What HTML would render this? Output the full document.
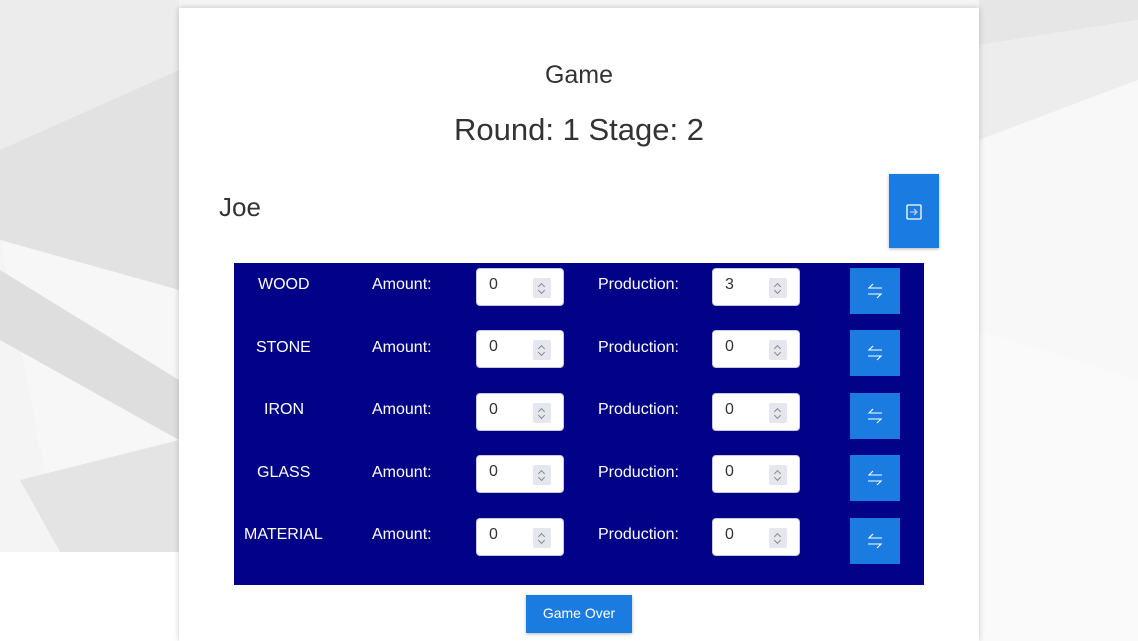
<!DOCTYPE html>
<html><head><meta charset="utf-8"><style>
*{margin:0;padding:0;box-sizing:border-box}
html,body{width:1138px;height:641px;overflow:hidden}
body{position:relative;font-family:"Liberation Sans",sans-serif;background:#fff}
.bg{position:absolute;left:0;top:0}
.card{position:absolute;left:179px;top:8px;width:800px;height:633px;background:#fff;box-shadow:0 0 6px rgba(0,0,0,.2)}
.t{position:absolute;color:#333;white-space:nowrap}
.tbl{position:absolute;left:234px;top:263px;width:690px;height:322px;background:#020288}
.w{position:absolute;color:#fff;font-size:16px;white-space:nowrap}
.inp{position:absolute;width:88px;height:38px;background:#fff;border-radius:4px;border:1px solid #c8c8d8}
.inp span{position:absolute;left:12px;top:7px;font-size:16px;color:#333}
.inp i{position:absolute;left:56px;top:9px;width:18px;height:20px;background:#e6e6ee;border-radius:2px}
.inp i:before{content:"";position:absolute;left:6px;top:6px;width:4px;height:4px;border-left:1px solid #888;border-top:1px solid #888;transform:rotate(45deg)}
.inp i:after{content:"";position:absolute;left:6px;top:10px;width:4px;height:4px;border-right:1px solid #888;border-bottom:1px solid #888;transform:rotate(45deg)}
.btn{position:absolute;left:616px;width:50px;height:46px;background:#1a7ce0}
.btn svg{position:absolute;left:17px;top:14px}
</style></head><body>
<svg class="bg" width="1138" height="641">
<rect width="1138" height="641" fill="#f4f4f4"/>
<polygon points="0,0 179,0 179,70 0,150" fill="#ececec"/>
<polygon points="0,150 179,70 179,290 0,240" fill="#e2e2e2"/>
<polygon points="0,240 179,290 179,552 60,552" fill="#f7f7f7"/>
<polygon points="0,270 179,380 179,440 0,340" fill="#dedede"/>
<polygon points="20,480 179,440 179,552 60,552" fill="#e4e4e4"/>
<polygon points="0,552 1138,552 1138,641 0,641" fill="#fff"/>
<polygon points="979,0 1138,0 1138,20 979,45" fill="#e6e6e6"/>
<polygon points="979,45 1138,20 1138,80 979,140" fill="#ededed"/>
<polygon points="979,140 1138,80 1138,380 979,330" fill="#f8f8f8"/>
<polygon points="979,330 1138,380 1138,641 979,641" fill="#fafafa"/>
</svg>
<div class="card"></div>
<div class="t" style="left:0;width:1158px;text-align:center;top:61px;font-size:25px">Game</div>
<div class="t" style="left:0;width:1158px;text-align:center;top:112px;font-size:31px">Round: 1 Stage: 2</div>
<div class="t" style="left:219px;top:192px;font-size:26px">Joe</div>
<div style="position:absolute;left:889px;top:174px;width:50px;height:74px;background:#1a7ce0;box-shadow:0 1px 3px rgba(0,0,0,.3)">
<svg style="position:absolute;left:17px;top:30px" width="16" height="16" viewBox="0 0 16 16" fill="none" stroke="#fff" stroke-width="1.3"><rect x="1" y="1" width="14" height="14" rx="1"/><path d="M4 8h7M8 5l3 3-3 3" stroke="#bcd"/></svg></div>
<div class="tbl">
<div class="w" style="left:24px;top:13px">WOOD</div>
<div class="w" style="left:22px;top:76px">STONE</div>
<div class="w" style="left:30px;top:138px">IRON</div>
<div class="w" style="left:23px;top:201px">GLASS</div>
<div class="w" style="left:10px;top:263px">MATERIAL</div>
</div>
<div style="position:absolute;left:526px;top:595px;width:106px;height:38px;background:#1a7ce0;color:#fff;font-size:14px;text-align:center;line-height:36px;box-shadow:0 1px 3px rgba(0,0,0,.3)">Game Over</div>
<div style="position:absolute;left:234px;top:263px">
<div class="w" style="left:138px;top:13px">Amount:</div><div class="w" style="left:364px;top:13px">Production:</div>
<div class="inp" style="left:242px;top:5px"><span>0</span><i></i></div><div class="inp" style="left:478px;top:5px"><span>3</span><i></i></div>
<div class="btn" style="top:5px"><svg width="16" height="18" viewBox="0 0 16 18" fill="none" stroke="#fff" stroke-width="1.1"><path d="M15 6H2l4-4M1 12h13l-4 4"/></svg></div>
<div class="w" style="left:138px;top:76px">Amount:</div><div class="w" style="left:364px;top:76px">Production:</div>
<div class="inp" style="left:242px;top:67px"><span>0</span><i></i></div><div class="inp" style="left:478px;top:67px"><span>0</span><i></i></div>
<div class="btn" style="top:67px"><svg width="16" height="18" viewBox="0 0 16 18" fill="none" stroke="#fff" stroke-width="1.1"><path d="M15 6H2l4-4M1 12h13l-4 4"/></svg></div>
<div class="w" style="left:138px;top:138px">Amount:</div><div class="w" style="left:364px;top:138px">Production:</div>
<div class="inp" style="left:242px;top:130px"><span>0</span><i></i></div><div class="inp" style="left:478px;top:130px"><span>0</span><i></i></div>
<div class="btn" style="top:130px"><svg width="16" height="18" viewBox="0 0 16 18" fill="none" stroke="#fff" stroke-width="1.1"><path d="M15 6H2l4-4M1 12h13l-4 4"/></svg></div>
<div class="w" style="left:138px;top:201px">Amount:</div><div class="w" style="left:364px;top:201px">Production:</div>
<div class="inp" style="left:242px;top:192px"><span>0</span><i></i></div><div class="inp" style="left:478px;top:192px"><span>0</span><i></i></div>
<div class="btn" style="top:192px"><svg width="16" height="18" viewBox="0 0 16 18" fill="none" stroke="#fff" stroke-width="1.1"><path d="M15 6H2l4-4M1 12h13l-4 4"/></svg></div>
<div class="w" style="left:138px;top:263px">Amount:</div><div class="w" style="left:364px;top:263px">Production:</div>
<div class="inp" style="left:242px;top:255px"><span>0</span><i></i></div><div class="inp" style="left:478px;top:255px"><span>0</span><i></i></div>
<div class="btn" style="top:255px"><svg width="16" height="18" viewBox="0 0 16 18" fill="none" stroke="#fff" stroke-width="1.1"><path d="M15 6H2l4-4M1 12h13l-4 4"/></svg></div>
</div>
</body></html>
